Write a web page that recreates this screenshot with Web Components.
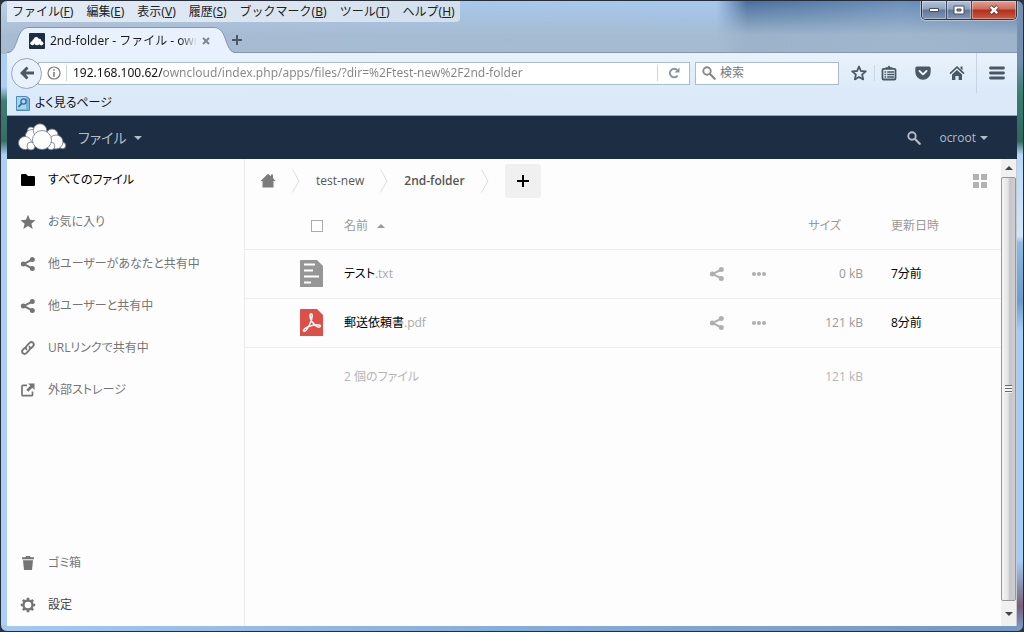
<!DOCTYPE html>
<html lang="ja">
<head>
<meta charset="utf-8">
<title>2nd-folder - ファイル - ownCloud</title>
<style>
  html, body { margin: 0; }
  body {
    min-height: 100vh; display: flex; background: #2b3340;
    font: 12px/18px "Open Sans", "Noto Sans CJK JP", sans-serif;
    font-feature-settings: "palt"; color: #222;
  }
</style>
</head>
<body>
<desktop-window>
  <menu-bar slot="menu"></menu-bar>
  <window-controls slot="controls"></window-controls>
  <browser-tab slot="tabs">2nd-folder - ファイル - ownCloud</browser-tab>
  <nav-bar slot="nav"></nav-bar>
  <bookmark-bar slot="bookmarks">よく見るページ</bookmark-bar>
  <cloud-app slot="page">
    <cloud-header slot="header" user="ocroot">ファイル</cloud-header>
    <side-nav slot="side">
      <side-item icon="folder" active>すべてのファイル</side-item>
      <side-item icon="star">お気に入り</side-item>
      <side-item icon="share">他ユーザーがあなたと共有中</side-item>
      <side-item icon="share">他ユーザーと共有中</side-item>
      <side-item icon="link">URLリンクで共有中</side-item>
      <side-item icon="external">外部ストレージ</side-item>
      <side-item slot="bottom" icon="trash">ゴミ箱</side-item>
      <side-item slot="bottom" icon="gear" dark>設定</side-item>
    </side-nav>
    <crumb-bar></crumb-bar>
    <file-list></file-list>
    <scroll-rail slot="rail"></scroll-rail>
  </cloud-app>
</desktop-window>

<script>
const ICONS = {
  folder: [16, 16, '<path d="M1 3.200Q1 2 2.200 2H6l2 2h6q1 0 1 1v8q0 1-1 1H2q-1 0-1-1z"/>'],
  star: [16, 16, '<path d="M8 .8l2.100 4.900 5.400.5-4.100 3.500 1.300 5.200L8 12.100 3.300 14.900l1.300-5.200L.5 6.200l5.400-.5z"/>'],
  share: [16, 16, '<path d="M12.300 3.700L3.500 8l8.800 4.300" fill="none" stroke="currentColor" stroke-width="2"/><circle cx="12.300" cy="3.600" r="2.500"/><circle cx="3.300" cy="8" r="2.500"/><circle cx="12.300" cy="12.400" r="2.500"/>'],
  link: [16, 16, '<g fill="none" stroke="currentColor" stroke-width="1.900" stroke-linecap="round"><path d="M6.400 9.300c-.9-1.300-.7-2.500.3-3.500l2.900-2.900c1.100-1.100 2.500-1.100 3.500-.1s.9 2.400-.2 3.500L11.200 8.200"/><path d="M9.500 6.700c.9 1.300.7 2.500-.3 3.500l-2.900 2.900c-1.100 1.100-2.500 1.100-3.500.1s-.9-2.400.2-3.500L4.700 7.900"/></g>'],
  external: [16, 16, '<path d="M7 3.300H3q-1 0-1 1v8.400q0 1 1 1h8.500q1 0 1-1V9.500" fill="none" stroke="currentColor" stroke-width="1.700"/><path d="M8 1.500h6.500V8l-2.200-2.200-4 4-2-2 4-4z"/>'],
  trash: [16, 16, '<path d="M6 1h4l.6 1.300H14V4.200H2V2.300h3.400zM3 5.200h10L12 15H4z"/>'],
  gear: [16, 16, '<circle cx="8" cy="8" r="4.500" fill="none" stroke="currentColor" stroke-width="2.400"/><path d="M8 .8v2.400M8 12.800v2.400M.8 8h2.400M12.800 8h2.400M2.900 2.900l1.700 1.700M11.400 11.400l1.700 1.700M2.900 13.100l1.700-1.700M11.400 4.600l1.700-1.700" stroke="currentColor" stroke-width="2.600"/>'],
  home: [16, 16, '<path d="M8 .8l3 2.500V1.600h2v3.400L15.500 8H13.500v6.500h-11V8H.5z"/>'],
  dots: [16, 16, '<circle cx="3" cy="8" r="2.100"/><circle cx="8" cy="8" r="2.100"/><circle cx="13" cy="8" r="2.100"/>'],
  grid: [14, 14, '<path d="M0 0h6v6H0zM8 0h6v6H8zM0 8h6v6H0zM8 8h6v6H8z"/>'],
  plus: [14, 14, '<path d="M6 1h2v5h5v2H8v5H6V8H1V6h5z"/>'],
  chevron: [8, 24, '<path d="M.5 .5L7 12 .5 23.500" fill="none" stroke="currentColor"/>'],
  search: [14, 14, '<circle cx="5" cy="5" r="3.700" fill="none" stroke="currentColor" stroke-width="1.900"/><path d="M8 8l4.700 4.700" stroke="currentColor" stroke-width="2.300" stroke-linecap="round"/>'],
  down: [8, 4, '<path d="M0 0h8L4 4z"/>'],
  up: [8, 4, '<path d="M0 4h8L4 0z"/>'],
  txt: [24, 28, '<path d="M1 0h16l6 6v21H0V1q0-1 1-1z" fill="#969696"/><path d="M4 4.500h11M4 10.500h9M4 16.500h15M4 22.500h7" stroke="#fff" stroke-width="2"/>'],
  pdf: [24, 28, '<path d="M1 0h16l6 6v21H0V1q0-1 1-1z" fill="#dc5047"/><path d="M3.500 21.500c0-2.500 8.500-6 14.500-5.800 3 .1 3.200 2.100 1.200 2.300C15.500 18.300 9.800 11 10 6.700c.1-2.600 2.300-2.400 2.200.2C12 12 7.500 21 4.600 22.200c-.7.200-1.100-.2-1.100-.7z" fill="none" stroke="#fff" stroke-width="1.500"/>'],
  back: [16, 16, '<path d="M7.500 1.500l2 2L6.700 6.500H15v3H6.700l2.800 3-2 2L1 8z"/>'],
  info: [14, 14, '<circle cx="7" cy="7" r="6" fill="none" stroke="currentColor" stroke-width="1.200"/><path d="M6.200 3.300h1.600v1.500H6.200zM6.200 6h1.600v4.700H6.200z"/>'],
  reload: [14, 14, '<path d="M10.600 9.600a4.300 4.300 0 1 1-.3-5.500" fill="none" stroke="currentColor" stroke-width="1.900"/><path d="M12.500 1.500v5h-5z"/>'],
  outline: [16, 16, '<path d="M8 1.500l1.900 4.500 4.900.4-3.700 3.200 1.100 4.800L8 11.900l-4.200 2.500 1.100-4.800L1.200 6.400 6.100 6z" fill="none" stroke="currentColor" stroke-width="1.800" stroke-linejoin="round"/>'],
  clip: [16, 16, '<path d="M2.500 3.800h11q1 0 1 1v8.700q0 1-1 1h-11q-1 0-1-1V4.800q0-1 1-1z" fill="none" stroke="currentColor" stroke-width="1.800"/><path d="M4.500 4V2.300h2L8 .5l1.500 1.800h2V4z"/><path d="M3.500 7h1.700M6.200 7H13M3.500 9.500h1.700M6.200 9.500H13M3.500 12h1.700M6.200 12H13" stroke="currentColor" stroke-width="1.300"/>'],
  pocket: [16, 16, '<path d="M2 1.500h12q1.700 0 1.700 1.700V7a7.700 7.700 0 0 1-15.400 0V3.200Q.3 1.500 2 1.500z"/><path d="M4.500 6L8 9.400 11.500 6" fill="none" stroke="#eaf3fc" stroke-width="1.900" stroke-linecap="round" stroke-linejoin="round"/>'],
  house: [16, 16, '<path d="M8 1l7.500 7-1.100 1.200L8 3.300 1.600 9.200.5 8z"/><path d="M11.500 1.500h2v4l-2-1.900z"/><path d="M8 5l5 4.600v5.400H9.600v-4H6.400v4H3V9.600z"/>'],
  burger: [16, 16, '<path d="M1.500 3h13M1.500 8h13M1.500 13h13" stroke="currentColor" stroke-width="2.800" stroke-linecap="round"/>'],
  close: [8, 8, '<path d="M1 1l6 6M7 1L1 7" stroke="currentColor" stroke-width="2"/>'],
  newtab: [10, 10, '<path d="M5 0v10M0 5h10" stroke="currentColor" stroke-width="2"/>'],
  places: [14, 16, '<path d="M.5 1.500h10l3 2v12H.5z" fill="#78b4da" stroke="#4a8dba"/><path d="M1 2h9v12H1z" fill="#a9d5ee"/><circle cx="7.500" cy="6.500" r="2.600" fill="none" stroke="#2d6d9c" stroke-width="1.300"/><path d="M5.600 8.500L2.500 12" stroke="#2d6d9c" stroke-width="1.700"/>'],
  logo: [48, 30, '<g fill="#fff" stroke="#6c7788" stroke-width=".8"><circle cx="13" cy="7.500" r="3.500"/><circle cx="34" cy="12" r="6"/><circle cx="14" cy="13" r="6.500"/><circle cx="22" cy="7.500" r="6.700"/><circle cx="7" cy="20" r="6.500"/><circle cx="44.500" cy="22.500" r="3.200"/><circle cx="38" cy="19" r="7"/><circle cx="13" cy="23" r="4"/><circle cx="33" cy="23" r="3.800"/><circle cx="24" cy="17" r="9.500"/></g>'],
  min: [12, 6, '<path d="M1.500 1.500h9v3h-9z" fill="#fff" stroke="#4a4f5c"/>'],
  max: [12, 10, '<path d="M1 1h10v8H1z" fill="#fff" stroke="#4a4f5c"/><path d="M4 4h4v2H4z" fill="#7186a3" stroke="#4a4f5c"/>'],
  quit: [12, 10, '<path d="M2.500 1.500l7 7M9.500 1.500l-7 7" stroke="#5b3a3c" stroke-width="4"/><path d="M2.800 1.800l6.400 6.400M9.200 1.800L2.800 8.200" stroke="#fff" stroke-width="2.400"/>'],
  favicon: [16, 16, '<rect width="16" height="16" rx="1" fill="#1d2d44"/><g fill="#fff"><circle cx="3.300" cy="10.300" r="2"/><circle cx="5" cy="8" r="1.800"/><circle cx="7.300" cy="6.500" r="2.500"/><circle cx="8" cy="9.300" r="3"/><circle cx="10.300" cy="7.800" r="2"/><circle cx="12.300" cy="10.300" r="2.100"/></g>']
};

const define = (name, css, html, setup) => {
  const template = document.createElement('template');
  template.innerHTML = `<style>
    *{box-sizing:border-box}
    button,a,input{font:inherit;color:inherit;font-feature-settings:inherit}
    button{border:0;background:none;padding:0;margin:0;display:flex;align-items:center;justify-content:center}
    a{text-decoration:none}
    ${css}</style>${html}`;
  customElements.define(name, class extends HTMLElement {
    constructor() {
      super();
      this.attachShadow({ mode: 'open' }).append(template.content.cloneNode(true));
    }
    connectedCallback() { if (setup) setup(this, this.shadowRoot); }
  });
};

const iconSvg = name => {
  const [w, h, body] = ICONS[name];
  return `<svg width="${w}" height="${h}" viewBox="0 0 ${w} ${h}" aria-hidden="true">${body}</svg>`;
};

define('ui-icon', ':host{display:inline-flex;flex:none} svg{display:block;fill:currentColor}', '<span></span>',
  (el, root) => { root.querySelector('span').innerHTML = iconSvg(el.getAttribute('name')); });

define('desktop-window', `
  :host{box-sizing:border-box;flex:1;min-width:0;display:flex;flex-direction:column;border:1px solid #262c38;border-radius:7px;
    padding:0 6px 5px;overflow:hidden;
    background:
      linear-gradient(180deg,transparent 86px,#3d7d73 100px,#356f66 140px,transparent 154px) left/6px 100% no-repeat,
      linear-gradient(180deg,#7590af 60px,#3d7d73 92px,#2f675c 140px,#b9d9f8 154px,#d4e6f8 235px,#8fb9e3 242px,#6f9bc8 300px,#a7cdf4 330px,#a7cdf4 560px,#755f78 605px,#7fa2cb) right/6px 100% no-repeat,
      linear-gradient(90deg,#a4c9f0,#86add7 50%,#7398c2) bottom/100% 6px no-repeat,
      linear-gradient(180deg,transparent,rgba(165,186,207,.9) 34px) 0 0/100% 53px no-repeat,
      linear-gradient(90deg,#bdd0e6,#a9c8ec 45%,#a6c8ef 70%,#4a6f9f 73%,#6b8fba 88%,#4f77a4) 0 0/100% 53px no-repeat,
      #abcff6}
  .title{height:21px;display:flex;justify-content:space-between;align-items:flex-start}
  .tabs{height:31px;display:flex;align-items:flex-end;box-shadow:inset 0 -1px #8196b0}
  .newtab{width:30px;height:26px;margin-left:-14px;color:#4b5866}
  ::slotted([slot=page]){flex:1}`,
  `<div class="title"><slot name="menu"></slot><slot name="controls"></slot></div>
   <div class="tabs"><slot name="tabs"></slot><button class="newtab" aria-label="新しいタブ"><ui-icon name="newtab"></ui-icon></button></div>
   <slot name="nav"></slot><slot name="bookmarks"></slot><slot name="page"></slot>`);

define('menu-bar', `
  :host{display:flex;gap:13px;height:21px;padding:0 5px;background:linear-gradient(90deg,#e3ecf6,#d3e0ec);border-radius:0 0 4px 0;
    font-family:"Noto Sans","Noto Sans CJK JP",sans-serif;font-feature-settings:normal}
  button{white-space:nowrap} u{text-underline-offset:1px}`,
  [['ファイル','F'],['編集','E'],['表示','V'],['履歴','S'],['ブックマーク','B'],['ツール','T'],['ヘルプ','H']]
    .map(([t, k]) => `<button><span>${t}(<u>${k}</u>)</span></button>`).join(''));

define('window-controls', `
  :host{display:flex;height:18px;border:1px solid #2b3446;border-top:0;border-radius:0 0 5px 5px;overflow:hidden;box-shadow:0 0 0 1px rgba(255,255,255,.4)}
  button{width:25px;background:linear-gradient(#b4c3d8,#8fa3bf 45%,#5f7798 50%,#8296b3);border-right:1px solid #3c4a62;box-shadow:inset 0 0 0 1px rgba(255,255,255,.35)}
  .close{width:44px;border:0;background:linear-gradient(#dfa294,#cf6b58 45%,#b0301c 50%,#cb5a42)}`,
  `<button aria-label="最小化"><ui-icon name="min"></ui-icon></button>
   <button aria-label="最大化"><ui-icon name="max"></ui-icon></button>
   <button class="close" aria-label="閉じる"><ui-icon name="quit"></ui-icon></button>`);

define('browser-tab', `
  :host{display:flex;height:26px;font-family:"Noto Sans","Noto Sans CJK JP",sans-serif;font-feature-settings:normal;color:#1c1c1c}
  svg{display:block;flex:none}
  .body{display:flex;align-items:center;width:185px;background:#e9f2fc;border-top:1px solid #8196b0}
  .text{flex:1;min-width:0;margin-left:5px;overflow:hidden;white-space:nowrap;
    -webkit-mask-image:linear-gradient(90deg,#000 130px,transparent 147px);mask-image:linear-gradient(90deg,#000 130px,transparent 147px)}
  button{flex:none;width:16px;height:16px;color:#7c8894}`,
  `<svg width="22" height="26" viewBox="0 0 22 26"><path d="M0 26C12 26 8 .5 22 .5V26z" fill="#e9f2fc"/><path d="M0 25.500C12 25.500 8 .5 22 .5" fill="none" stroke="#8196b0"/></svg>
   <div class="body"><ui-icon name="favicon"></ui-icon><span class="text"><slot></slot></span><button aria-label="タブを閉じる"><ui-icon name="close"></ui-icon></button></div>
   <svg width="22" height="26" viewBox="0 0 22 26"><path d="M22 26C10 26 14 .5 0 .5V26z" fill="#e9f2fc"/><path d="M22 25.500C10 25.500 14 .5 0 .5" fill="none" stroke="#8196b0"/></svg>`);

define('nav-bar', `
  :host{display:flex;align-items:center;height:40px;padding-left:4px;background:linear-gradient(#e9f2fc,#dbe9f8);color:#4a5866;
    font-family:"Noto Sans","Noto Sans CJK JP",sans-serif}
  .back{width:31px;height:31px;flex:none;border:1px solid #94a7bd;border-radius:50%;background:#e9f2fb;z-index:1}
  .url,.search{display:flex;align-items:center;height:23px;background:#fff;border:1px solid #a9bccf}
  .url{flex:1;min-width:0;margin:0 5px 0 -4px;padding-left:8px;color:#7a7a7a}
  input{border:0;outline:0;padding:0;background:none;min-width:0;flex:1}
  .url input{margin:0 6px;color:#858585;background:linear-gradient(90deg,#111 90px,#858585 90px);-webkit-background-clip:text;background-clip:text;-webkit-text-fill-color:transparent}
  .sep{width:1px;height:16px;background:#cbd6e2;flex:none}
  .url ui-icon+.sep{margin-left:5px}
  .reload{width:31px;height:20px;color:#8593a2}
  .search{width:144px;padding-left:6px;gap:4px;color:#888}
  .search input::placeholder{color:#777;opacity:1}
  .tool{height:30px;flex:none}
  .star{width:30px;margin-left:5px}.clip{width:28px}.pocket{width:40px}.house{width:28px}
  .burger{width:41px;height:40px;margin-left:5px;border-left:1px solid #c5d3e2}`,
  `<button class="back" aria-label="戻る"><ui-icon name="back"></ui-icon></button>
   <div class="url"><ui-icon name="info"></ui-icon><span class="sep"></span>
     <input aria-label="アドレス" value="192.168.100.62/owncloud/index.php/apps/files/?dir=%2Ftest-new%2F2nd-folder">
     <span class="sep"></span><button class="reload" aria-label="再読み込み"><ui-icon name="reload"></ui-icon></button></div>
   <div class="search"><ui-icon name="search"></ui-icon><input aria-label="検索" placeholder="検索"></div>
   <button class="tool star" aria-label="ブックマークに追加"><ui-icon name="outline"></ui-icon></button><span class="sep"></span>
   <button class="tool clip" aria-label="ブックマーク"><ui-icon name="clip"></ui-icon></button>
   <button class="tool pocket" aria-label="Pocket"><ui-icon name="pocket"></ui-icon></button>
   <button class="tool house" aria-label="ホーム"><ui-icon name="house"></ui-icon></button>
   <button class="burger" aria-label="メニュー"><ui-icon name="burger"></ui-icon></button>`);

define('bookmark-bar', `
  :host{display:flex;align-items:center;box-sizing:border-box;height:23px;padding:0 9px 2px;background:#dbe9f8;border-bottom:1px solid #91a4b8}
  a{display:flex;align-items:center;gap:5px;color:#111}`,
  `<a href="#places"><ui-icon name="places"></ui-icon><span><slot></slot></span></a>`);

define('cloud-app', `
  :host{display:flex;flex-direction:column;background:#fdfdfd}
  .cols{flex:1;display:flex;align-items:stretch}
  main{flex:1;min-width:0}
  ::slotted([slot=side]){flex:none}`,
  `<slot name="header"></slot><div class="cols"><slot name="side"></slot><main><slot></slot></main><slot name="rail"></slot></div>`);

define('cloud-header', `
  :host{display:flex;align-items:center;justify-content:space-between;height:43px;padding:0 29px 0 11px;background:#1d2d44;color:#b4bcc6}
  div,a,button{display:flex;align-items:center}
  .app{font-size:14px;gap:8px;margin-left:12px}
  .right{gap:18px}
  .user{gap:4px}`,
  `<div><a href="#home" aria-label="ownCloud"><ui-icon name="logo"></ui-icon></a>
     <button class="app"><span><slot></slot></span><ui-icon name="down"></ui-icon></button></div>
   <div class="right"><button aria-label="検索"><ui-icon name="search"></ui-icon></button>
     <button class="user"><span id="user"></span><ui-icon name="down"></ui-icon></button></div>`,
  (el, root) => { root.querySelector('#user').textContent = el.getAttribute('user'); });

define('side-nav', `
  :host{display:flex;width:238px;box-sizing:border-box;border-right:1px solid #ececec}
  nav{flex:1;display:flex;flex-direction:column;justify-content:space-between}`,
  `<nav><div><slot></slot></div><div><slot name="bottom"></slot></div></nav>`);

define('side-item', `
  :host{display:block;color:#757575}
  :host([active]){color:#000} :host([dark]) .label{color:#444}
  a{display:flex;align-items:center;height:42px;padding-left:13px;gap:12px}
  svg{display:block;fill:currentColor}`,
  `<a href="#view"><span class="icon"></span><span class="label"><slot></slot></span></a>`,
  (el, root) => { root.querySelector('.icon').innerHTML = iconSvg(el.getAttribute('icon')); });

define('crumb-bar', `
  :host{display:flex;align-items:center;justify-content:space-between;height:44px;padding:0 14px 0 15px;color:#555}
  nav{display:flex;align-items:center;gap:16px}
  a{display:flex} .home{color:#7c7c7c} .chev{color:#ddd} b{font-weight:600}
  .add{width:36px;height:34px;background:#f0f0f0;border-radius:3px;color:#000}
  .view{color:#b2b2b2}`,
  `<nav aria-label="場所"><a class="home" href="#root" aria-label="ホーム"><ui-icon name="home"></ui-icon></a><ui-icon class="chev" name="chevron"></ui-icon>
    <a href="#test-new">test-new</a><ui-icon class="chev" name="chevron"></ui-icon>
    <a href="#2nd-folder"><b>2nd-folder</b></a><ui-icon class="chev" name="chevron"></ui-icon>
    <button class="add" aria-label="新規"><ui-icon name="plus"></ui-icon></button></nav>
   <button class="view" aria-label="表示の切り替え"><ui-icon name="grid"></ui-icon></button>`);

const FILES = [['txt', 'テスト', '.txt', '0 kB', '7分前'], ['pdf', '郵送依頼書', '.pdf', '121 kB', '8分前']];
define('file-list', `
  :host{display:block}
  table{width:100%;border-collapse:collapse;table-layout:fixed}
  th,td{padding:0;text-align:left;font-weight:400}
  .c-icon{width:99px}.c-act{width:84px}.c-size{width:97px}.c-date{width:124px}
  thead tr{height:46px} tbody tr{height:49px} tfoot tr{height:60px}
  thead tr,tbody tr{border-bottom:1px solid #ececec}
  thead,.size{color:#999}
  tfoot,tfoot .size{color:#b5b5b5}
  input{appearance:none;display:block;width:12px;height:12px;margin:0 0 0 66px;border:1px solid #aaa;background:#fff}
  .sort{display:flex;gap:9px}
  .size{text-align:right;padding-right:14px} thead .size{padding-right:36px}
  .date{padding-left:14px} tbody .date,a{color:#000} i{font-style:normal;color:#aaa}
  .file{padding-left:55px}.file ui-icon{display:block}
  .acts{display:flex;color:#b0b0b0}.acts button{width:42px;height:30px}`,
  `<table><colgroup><col class="c-icon"><col><col class="c-act"><col class="c-size"><col class="c-date"></colgroup>
   <thead><tr><th><input type="checkbox" aria-label="すべて選択"></th><th><button class="sort">名前<ui-icon name="up"></ui-icon></button></th><th></th><th class="size">サイズ</th><th class="date">更新日時</th></tr></thead>
   <tbody>${FILES.map(([icon, name, ext, size, date]) => `<tr><td class="file"><ui-icon name="${icon}"></ui-icon></td>
     <td><a href="#${icon}">${name}<i>${ext}</i></a></td>
     <td><div class="acts"><button aria-label="共有"><ui-icon name="share"></ui-icon></button><button aria-label="操作"><ui-icon name="dots"></ui-icon></button></div></td>
     <td class="size">${size}</td><td class="date">${date}</td></tr>`).join('')}</tbody>
   <tfoot><tr><td></td><td>2 個のファイル</td><td></td><td class="size">121 kB</td><td></td></tr></tfoot></table>`);

define('scroll-rail', `
  :host{display:flex;flex-direction:column;width:15px;background:#f0f0f0;border-right:1px solid #c4cad2}
  button{height:18px;color:#444}
  button:last-child{height:25px}
  .thumb{flex:1;display:flex;align-items:center;justify-content:center;border:1px solid #979797;border-radius:2px;background:linear-gradient(90deg,#f5f5f5,#e4e4e6 45%,#c6c6ca 60%,#cfcfd2)}
  .grip{width:7px;height:8px;background:repeating-linear-gradient(#666 0 1px,#f5f5f5 1px 3px)}`,
  `<button aria-label="上へ"><ui-icon name="up"></ui-icon></button><div class="thumb"><div class="grip"></div></div><button aria-label="下へ"><ui-icon name="down"></ui-icon></button>`);
</script>
</body>
</html>
